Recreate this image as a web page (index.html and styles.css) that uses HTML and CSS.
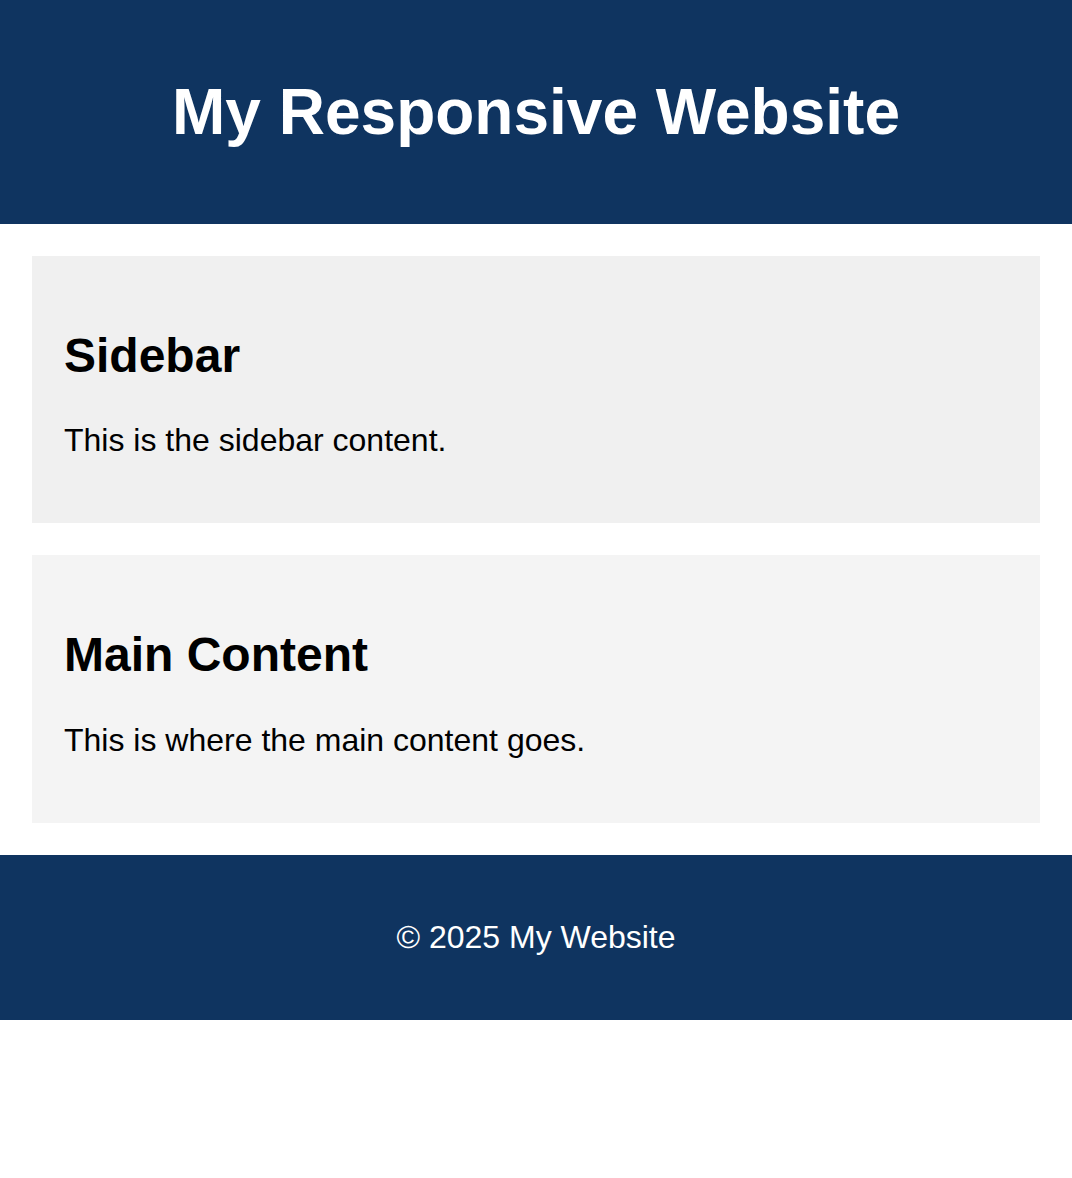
FILE: index.html
```html
<!DOCTYPE html>
<html lang="en">
<head>
  <meta charset="UTF-8">
  <meta name="viewport" content="width=device-width, initial-scale=1">
  <title>My Responsive Website</title>
  <link rel="stylesheet" href="styles.css">
</head>
<body>

  <header class="site-header">
    <h1>My Responsive Website</h1>
  </header>

  <div class="container">
    <aside class="sidebar">
      <h2>Sidebar</h2>
      <p>This is the sidebar content.</p>
    </aside>

    <main class="main-content">
      <h2>Main Content</h2>
      <p>This is where the main content goes.</p>
    </main>
  </div>

  <footer class="site-footer">
    <p>&copy; 2025 My Website</p>
  </footer>

</body>
</html>
```

FILE: styles.css
```css
body {
  margin: 0;
  font-family: 'Liberation Sans', Arial, sans-serif;
  font-size: 32px;
  color: #000;
  background: #fff;
}

.site-header {
  background: #0f3460;
  color: #fff;
  text-align: center;
  padding: 32px;
}

.site-header h1 {
  font-size: 64px;
  margin: 0.67em 0;
}

.container {
  display: flex;
  flex-direction: column;
  gap: 32px;
  padding: 32px;
}

.sidebar,
.main-content {
  padding: 32px;
}

.sidebar {
  background: #f0f0f0;
}

.main-content {
  background: #f4f4f4;
}

.sidebar h2,
.main-content h2 {
  font-size: 48px;
  margin: 0.83em 0;
}

.sidebar p,
.main-content p {
  margin: 32px 0;
}

.site-footer {
  background: #0f3460;
  color: #fff;
  text-align: center;
  padding: 32px;
}

.site-footer p {
  margin: 32px 0;
}

@media (min-width: 1200px) {
  .container {
    flex-direction: row;
  }
  .sidebar {
    flex: 1;
  }
  .main-content {
    flex: 3;
  }
}
```
